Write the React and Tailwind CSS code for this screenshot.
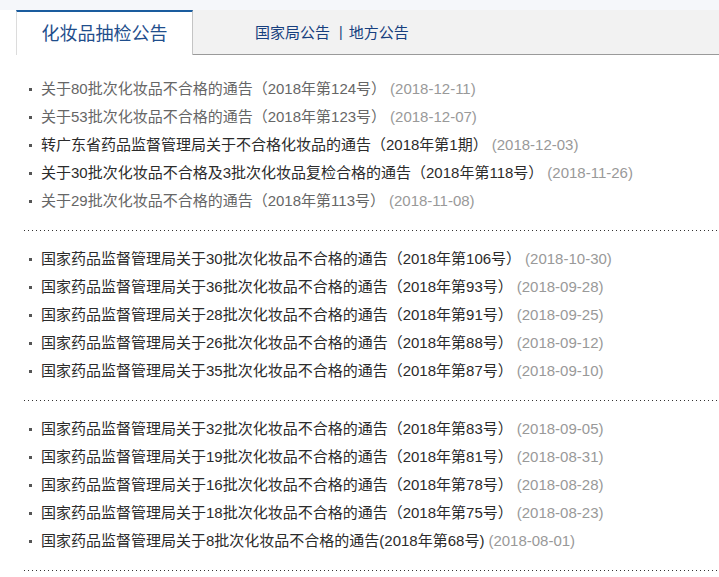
import React from 'react';

const groups = [
  [
    { t: '关于80批次化妆品不合格的通告（2018年第124号）', d: '(2018-12-11)', light: true },
    { t: '关于53批次化妆品不合格的通告（2018年第123号）', d: '(2018-12-07)', light: true },
    { t: '转广东省药品监督管理局关于不合格化妆品的通告（2018年第1期）', d: '(2018-12-03)' },
    { t: '关于30批次化妆品不合格及3批次化妆品复检合格的通告（2018年第118号）', d: '(2018-11-26)' },
    { t: '关于29批次化妆品不合格的通告（2018年第113号）', d: '(2018-11-08)', light: true },
  ],
  [
    { t: '国家药品监督管理局关于30批次化妆品不合格的通告（2018年第106号）', d: '(2018-10-30)' },
    { t: '国家药品监督管理局关于36批次化妆品不合格的通告（2018年第93号）', d: '(2018-09-28)' },
    { t: '国家药品监督管理局关于28批次化妆品不合格的通告（2018年第91号）', d: '(2018-09-25)' },
    { t: '国家药品监督管理局关于26批次化妆品不合格的通告（2018年第88号）', d: '(2018-09-12)' },
    { t: '国家药品监督管理局关于35批次化妆品不合格的通告（2018年第87号）', d: '(2018-09-10)' },
  ],
  [
    { t: '国家药品监督管理局关于32批次化妆品不合格的通告（2018年第83号）', d: '(2018-09-05)' },
    { t: '国家药品监督管理局关于19批次化妆品不合格的通告（2018年第81号）', d: '(2018-08-31)' },
    { t: '国家药品监督管理局关于16批次化妆品不合格的通告（2018年第78号）', d: '(2018-08-28)' },
    { t: '国家药品监督管理局关于18批次化妆品不合格的通告（2018年第75号）', d: '(2018-08-23)' },
    { t: '国家药品监督管理局关于8批次化妆品不合格的通告(2018年第68号)', d: '(2018-08-01)' },
  ],
];

const App = () => {
  return (
    <div className="min-h-screen bg-white font-['Liberation_Sans','Noto_Sans_CJK_SC',sans-serif]">
      <div className="h-[10px] bg-[#f5f7fa]" />

      {/* Tabs */}
      <div className="flex h-[45px]">
        <div className="w-[16px]" />
        <div className="w-[177px] bg-white border-t-2 border-t-[#1a5c9e] border-l border-l-[#dcdcdc] border-r border-r-[#c4c4c4] flex items-center justify-center text-[18px] text-[#1f4e8c] leading-none">
          化妆品抽检公告
        </div>
        <div className="flex-1 bg-[#f2f2f2] border-b border-b-[#9a9a9a] flex items-center pl-[62px] text-[15px] text-[#173f7e] leading-none">
          <a href="#">国家局公告</a>
          <span className="ml-[9px] mr-[6px] text-[14px]">|</span>
          <a href="#">地方公告</a>
        </div>
      </div>

      {/* Lists */}
      <div className="ml-[24px]">
        {groups.map((rows, gi) => (
          <div key={gi}>
            <ul className={gi === 0 ? 'pt-[20px] pb-[15px]' : 'pt-[14px] pb-[15px]'}>
              {rows.map((r, i) => (
                <li key={i} className="flex items-center h-[28px] text-[15px] whitespace-nowrap">
                  <span className="ml-[5px] w-[3px] h-[3px] bg-[#555]" />
                  <a href="#" className={`ml-[9px] ${r.light ? 'text-[#666]' : 'text-[#2b2b2b]'}`}>
                    {r.t}
                  </a>
                  <span className="ml-[4px] text-[#999]">{r.d}</span>
                </li>
              ))}
            </ul>
            <div className="h-px bg-[linear-gradient(to_right,#333_1px,transparent_1px)] bg-[length:4px_1px] bg-repeat-x" />
          </div>
        ))}
      </div>
    </div>
  );
};

export default App;
